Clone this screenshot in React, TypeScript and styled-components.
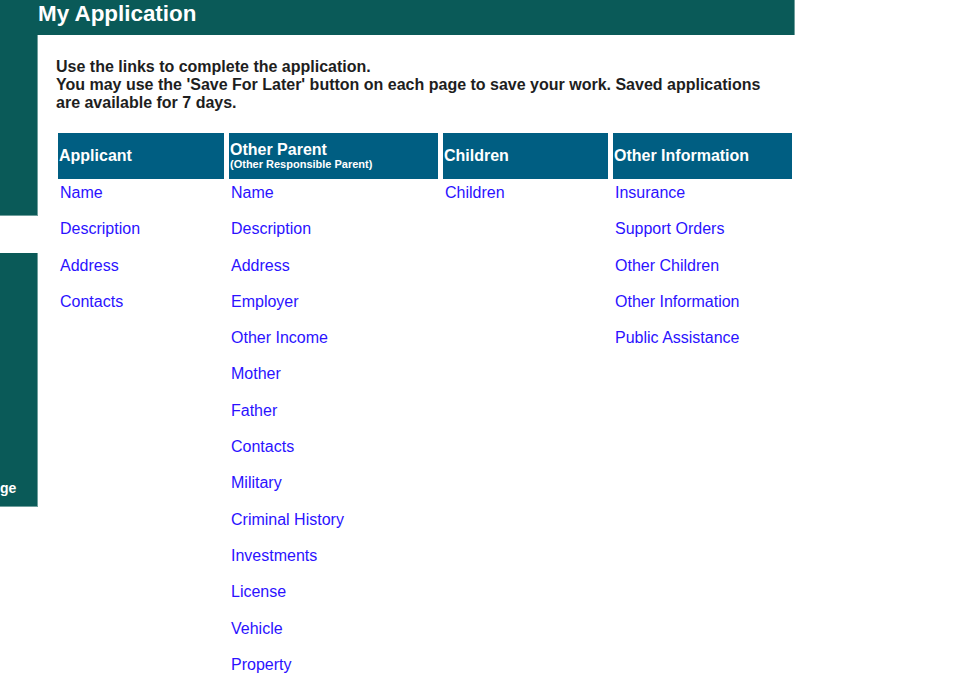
import React from 'react';
import styled, { createGlobalStyle } from 'styled-components';

const GlobalStyle = createGlobalStyle`
  html, body {
    margin: 0;
    padding: 0;
    background: #fff;
  }
  body {
    font-family: "Liberation Sans", Arial, sans-serif;
  }
`;

const Page = styled.div`
  width: 795px;
  display: flex;
  flex-direction: column;
`;

const TitleBar = styled.div`
  height: 35px;
  background-color: #0a5a58;
  border-right: 1px solid #6f9e9c;
  box-sizing: border-box;
  padding-left: 38px;
  color: #fff;
  font-size: 22.4px;
  font-weight: bold;
  line-height: 27px;
`;

const Body = styled.div`
  display: flex;
  align-items: flex-start;
`;

const Sidebar = styled.div`
  width: 38px;
  flex-shrink: 0;
  display: flex;
  flex-direction: column;
  gap: 37px;
`;

const NavBlock = styled.div<{ $height: number }>`
  height: ${(p) => p.$height}px;
  box-sizing: border-box;
  background-color: #0a5a58;
  border-right: 1px solid #6f9e9c;
  border-bottom: 1px solid #6f9e9c;
  display: flex;
  flex-direction: column;
  justify-content: flex-end;
  padding-bottom: 9px;
`;

const NavLabel = styled.span`
  color: #fff;
  font-size: 14px;
  font-weight: bold;
  line-height: 18px;
  white-space: nowrap;
`;

const Content = styled.div`
  flex: 1;
  background: #fff;
  padding: 23px 0 0 18px;
`;

const Intro = styled.p`
  margin: 0 0 21px;
  max-width: 725px;
  color: #1e1e1e;
  font-size: 16px;
  font-weight: bold;
  line-height: 18px;
`;

const Grid = styled.div`
  display: grid;
  grid-template-columns: 166px 209px 165px 179px;
  column-gap: 5px;
  margin-left: 2px;
`;

const HeadCell = styled.div`
  height: 46px;
  background-color: #005e82;
  color: #fff;
  padding: 0 1px;
  display: flex;
  flex-direction: column;
  justify-content: center;
  font-weight: bold;
`;

const HeadTitle = styled.span`
  font-size: 16px;
  line-height: 16px;
`;

const HeadSub = styled.span`
  font-size: 11px;
  line-height: 12px;
`;

const LinkList = styled.div`
  display: flex;
  flex-direction: column;
  padding-top: 5px;
`;

const NavLink = styled.a`
  display: block;
  height: 36.3px;
  padding-left: 2px;
  color: #2b12ff;
  text-decoration: none;
  font-size: 16px;
  line-height: 18px;
  cursor: pointer;
`;

const columns = [
  { title: 'Applicant', links: ['Name', 'Description', 'Address', 'Contacts'] },
  {
    title: 'Other Parent',
    sub: '(Other Responsible Parent)',
    links: [
      'Name',
      'Description',
      'Address',
      'Employer',
      'Other Income',
      'Mother',
      'Father',
      'Contacts',
      'Military',
      'Criminal History',
      'Investments',
      'License',
      'Vehicle',
      'Property',
    ],
  },
  { title: 'Children', links: ['Children'] },
  {
    title: 'Other Information',
    links: ['Insurance', 'Support Orders', 'Other Children', 'Other Information', 'Public Assistance'],
  },
];

export default function App() {
  return (
    <Page>
      <GlobalStyle />
      <TitleBar>My Application</TitleBar>
      <Body>
        <Sidebar>
          <NavBlock $height={181} />
          <NavBlock $height={254}>
            <NavLabel>ge</NavLabel>
          </NavBlock>
        </Sidebar>
        <Content>
          <Intro>
            Use the links to complete the application.
            <br />
            You may use the 'Save For Later' button on each page to save your work. Saved applications
            are available for 7 days.
          </Intro>
          <Grid>
            {columns.map((col) => (
              <HeadCell key={col.title}>
                <HeadTitle>{col.title}</HeadTitle>
                {col.sub && <HeadSub>{col.sub}</HeadSub>}
              </HeadCell>
            ))}
            {columns.map((col) => (
              <LinkList key={col.title}>
                {col.links.map((link) => (
                  <NavLink key={link}>{link}</NavLink>
                ))}
              </LinkList>
            ))}
          </Grid>
        </Content>
      </Body>
    </Page>
  );
}
